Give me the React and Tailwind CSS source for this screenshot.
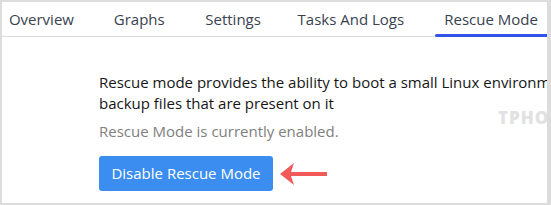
export default function App() {
  const font = { fontFamily: '"Open Sans", "Liberation Sans", sans-serif' };
  return (
    <div className="w-[551px] h-[205px] bg-[#dcdcdc] pl-[2px] pt-[2px]" style={font}>
      <div className="relative w-[545px] h-[201px] bg-white overflow-hidden">
        <div className="flex h-[35px] border-b border-[#dcdcdc] text-[15px] font-medium text-[#3a4250]">
          <div className="w-[79px] flex items-center justify-center">Overview</div>
          <div className="ml-[23px] w-[71px] flex items-center justify-center">Graphs</div>
          <div className="ml-[20px] w-[77px] flex items-center justify-center">Settings</div>
          <div className="ml-[16px] w-[127px] flex items-center justify-center whitespace-nowrap">Tasks And Logs</div>
          <div className="relative ml-[21px] w-[112px] flex items-center justify-center whitespace-nowrap">
            Rescue Mode
            <div className="absolute left-0 right-0 bottom-[-1px] h-[3px] bg-[#3353e8] rounded-l-sm"></div>
          </div>
        </div>
        <div className="pl-[97px] pt-[35px]">
          <p className="w-[700px] text-[15px] leading-[21px] text-[#161616] whitespace-nowrap">
            Rescue mode provides the ability to boot a small Linux environment in order to recover or
            <br />
            backup files that are present on it
          </p>
          <p className="mt-[7px] text-[15px] leading-[21px] text-[#808080]">Rescue Mode is currently enabled.</p>
          <div className="mt-[14px] flex items-center">
            <button className="w-[174px] h-[35px] rounded-[3px] bg-[#3b8ef0] text-white text-[15px] font-medium">
              Disable Rescue Mode
            </button>
            <svg width="48" height="24" viewBox="0 0 48 24" className="ml-[7px]">
              <path d="M0 12 L14 1 L11 10 L47 10 L47 14 L11 14 L14 23 Z" fill="#f25a5a" />
            </svg>
          </div>
        </div>
        <div className="absolute left-[496px] top-[103px] text-[17px] font-extrabold tracking-[1px] text-[#e2e2e2] whitespace-nowrap">TPHOSTING</div>
      </div>
    </div>
  );
}
